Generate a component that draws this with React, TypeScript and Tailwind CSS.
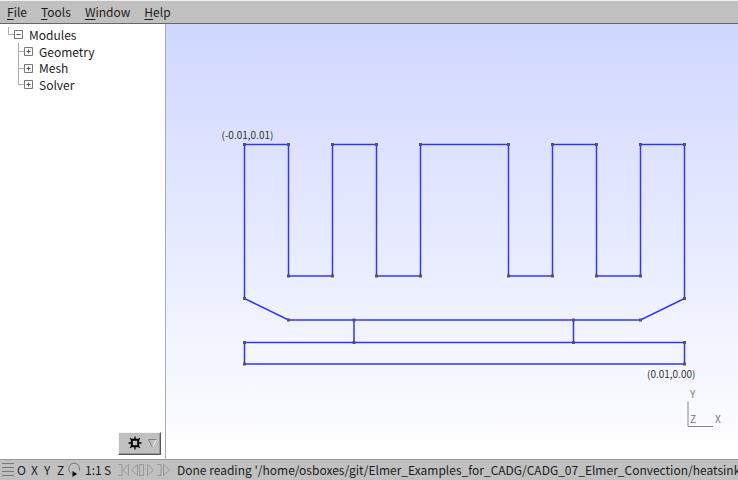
import React from "react";

const MENUS = ["File", "Tools", "Window", "Help"];
const MODULES = ["Geometry", "Mesh", "Solver"];

const HEATSINK: [number, number][] = [
  [244.5, 144.5], [288.5, 144.5], [288.5, 276], [332.5, 276], [332.5, 144.5],
  [376.5, 144.5], [376.5, 276], [420.5, 276], [420.5, 144.5], [508.5, 144.5],
  [508.5, 276], [552.5, 276], [552.5, 144.5], [596.5, 144.5], [596.5, 276],
  [640.5, 276], [640.5, 144.5], [684.5, 144.5], [684.5, 298.5], [640.5, 320],
  [573.5, 320], [354, 320], [288.5, 320], [244.5, 298.5],
];

const BOARD: [number, number][] = [
  [244.5, 342.5], [354, 342.5], [573.5, 342.5], [684.5, 342.5], [684.5, 364], [244.5, 364],
];

const toPoints = (pts: [number, number][]) => pts.map((p) => p.join(",")).join(" ");

function Toggle({ open, label }: { open?: boolean; label: string }) {
  return (
    <button aria-label={label} className="size-[9px] shrink-0 bg-white">
      <svg viewBox="0 0 9 9" className="block size-[9px]" fill="none" stroke="#777">
        <path d="M.5 .5h8v8h-8z" />
        <path d={open ? "M2.5 4.5h4" : "M2.5 4.5h4M4.5 2.5v4"} stroke="#555" />
      </svg>
    </button>
  );
}

function Tree() {
  return (
    <ul className="pt-[2px] pl-2 text-[12px] leading-4">
      <li>
        <div className="flex h-[17px] items-center">
          <svg viewBox="0 0 6 17" className="h-[17px] w-[6px]" fill="none" stroke="#aaa">
            <path d="M.5 1v7.5H6" />
          </svg>
          <Toggle open label="Collapse Modules" />
          <span className="pl-[6px]">Modules</span>
        </div>
        <ul className="pl-[10px]">
          {MODULES.map((name, i) => (
            <li key={name} className={i === 1 ? "flex h-4 items-center" : "flex h-[17px] items-center"}>
              <svg viewBox="0 0 6 17" className="h-[17px] w-[6px] shrink-0" fill="none" stroke="#aaa">
                <path d={i === 2 ? "M.5 0v8.5H6" : "M.5 0v17M.5 8.5H6"} />
              </svg>
              <Toggle label={`Expand ${name}`} />
              <span className="pl-[6px]">{name}</span>
            </li>
          ))}
        </ul>
      </li>
    </ul>
  );
}

function Drawing() {
  return (
    <svg viewBox="166 24 572 435" className="block h-full w-full" role="img" aria-label="Heatsink geometry">
      <g fill="none" stroke="#3434ff" strokeWidth="1.5">
        <polygon points={toPoints(HEATSINK)} />
        <polygon points={toPoints(BOARD)} />
        <path d="M354 320v22.5M573.5 320v22.5" />
      </g>
      <g fill="#55555c">
        {[...HEATSINK, ...BOARD].map(([x, y]) => (
          <rect key={`${x}-${y}`} x={x - 1.5} y={y - 1.5} width="3" height="3" />
        ))}
      </g>
      <g fill="#333" fontSize="10">
        <text x="221.5" y="139">(-0.01,0.01)</text>
        <text x="647" y="378">(0.01,0.00)</text>
      </g>
      <path d="M688 401.5v25h25" fill="none" stroke="#888" />
      <g fill="#777" fontSize="10">
        <text x="690" y="398">Y</text>
        <text x="690" y="423">Z</text>
        <text x="715" y="423">X</text>
      </g>
    </svg>
  );
}

function OptionsButton() {
  return (
    <button
      aria-label="Module options"
      className="flex h-[23px] w-[43px] items-center justify-end gap-[6px] border border-t-[#f4f4f4] border-r-[#555] border-b-[#555] border-l-[#f4f4f4] bg-[#c0c0c0] pr-[3px] pb-px shadow-[inset_-1px_-1px_#999]"
    >
      <svg viewBox="0 0 14 14" className="size-[14px]" fill="none" stroke="#000">
        <rect x="3.8" y="3.8" width="6.4" height="6.4" rx="1" strokeWidth="2" />
        <path d="M7 .5v3M7 10.5v3M.5 7h3M10.5 7h3M2.2 2.2l2 2M9.8 9.8l2 2M11.8 2.2l-2 2M4.2 9.8l-2 2" strokeWidth="1.3" />
      </svg>
      <svg viewBox="0 0 9 9" className="size-[9px]" fill="none">
        <path d="M8.5 .5L4.5 8.5" stroke="#eee" />
        <path d="M4.5 8.5L.5 .5h8" stroke="#808080" />
      </svg>
    </button>
  );
}

function StatusBar() {
  return (
    <footer className="flex h-[21px] shrink-0 items-center overflow-hidden border-t border-[#999] bg-[#c0c0c0] pl-[2px] text-[12px] leading-5 whitespace-nowrap">
      <button aria-label="Options" className="w-[15px] shrink-0">
        <svg viewBox="0 0 15 16" className="block h-4 w-[15px]" stroke="#777">
          <path d="M0 1.5h12M0 5.5h12M0 9.5h12M0 13.5h12" />
        </svg>
      </button>
      <button className="w-[14px] shrink-0 text-left">O</button>
      <button className="w-[13px] shrink-0 text-left">X</button>
      <button className="w-[13px] shrink-0 text-left">Y</button>
      <button className="w-[10px] shrink-0 text-left">Z</button>
      <button aria-label="Rotate" className="w-[18px] shrink-0">
        <svg viewBox="0 0 18 16" className="block h-4 w-[18px]" fill="none">
          <path d="M12.3 8.5A5.5 5.5 0 1 0 4.5 11.5" stroke="#777" />
          <path d="M5.5 9l4.5 3-4.5 3z" fill="#000" />
        </svg>
      </button>
      <button className="w-[19px] shrink-0 text-left">1:1</button>
      <button className="w-[14px] shrink-0 text-left">S</button>
      <div className="flex shrink-0">
        <button aria-label="First step">
          <svg viewBox="0 0 13 16" className="block h-4 w-[13px]" fill="none" stroke="#999">
            <path d="M0 2.5h4v11H0M10.5 2.5L4.5 8l6 5.5z" />
          </svg>
        </button>
        <button aria-label="Previous step">
          <svg viewBox="0 0 15 16" className="block h-4 w-[15px]" fill="none" stroke="#999">
            <path d="M6.5 2.5L.5 8l6 5.5zM8.5 2.5h4v11h-4z" />
          </svg>
        </button>
        <button aria-label="Play">
          <svg viewBox="0 0 11 16" className="block h-4 w-[11px]" fill="none" stroke="#999">
            <path d="M1.5 2.5l6 5.5-6 5.5z" />
          </svg>
        </button>
        <button aria-label="Next step">
          <svg viewBox="0 0 13 16" className="block h-4 w-[13px]" fill="none" stroke="#999">
            <path d="M0 2.5h4v11H0M6.5 2.5l6 5.5-6 5.5z" />
          </svg>
        </button>
      </div>
      <output className="pl-[7px]">
        Done reading '/home/osboxes/git/Elmer_Examples_for_CADG/CADG_07_Elmer_Convection/heatsink
      </output>
    </footer>
  );
}

export default function App() {
  return (
    <div className="flex h-screen flex-col overflow-hidden bg-white font-['Noto_Sans_CJK_SC','Noto_Sans',sans-serif] text-[#1c1c1c]">
      <nav className="flex h-6 shrink-0 items-center gap-[14px] border-t border-t-[#eee] border-b border-b-[#666] bg-[#c0c0c0] px-[7px] pb-px text-[12px] leading-5">
        {MENUS.map((m) => (
          <button key={m}>
            <span className="underline underline-offset-2">{m[0]}</span>
            {m.slice(1)}
          </button>
        ))}
      </nav>
      <main className="flex min-h-0 flex-1">
        <aside className="flex w-[166px] shrink-0 flex-col justify-between border-r border-[#aaa] bg-white">
          <Tree />
          <div className="flex justify-end pr-1 pb-1">
            <OptionsButton />
          </div>
        </aside>
        <section className="min-w-0 flex-1 bg-linear-to-b from-[#d0d7ff] to-white">
          <Drawing />
        </section>
      </main>
      <StatusBar />
    </div>
  );
}
